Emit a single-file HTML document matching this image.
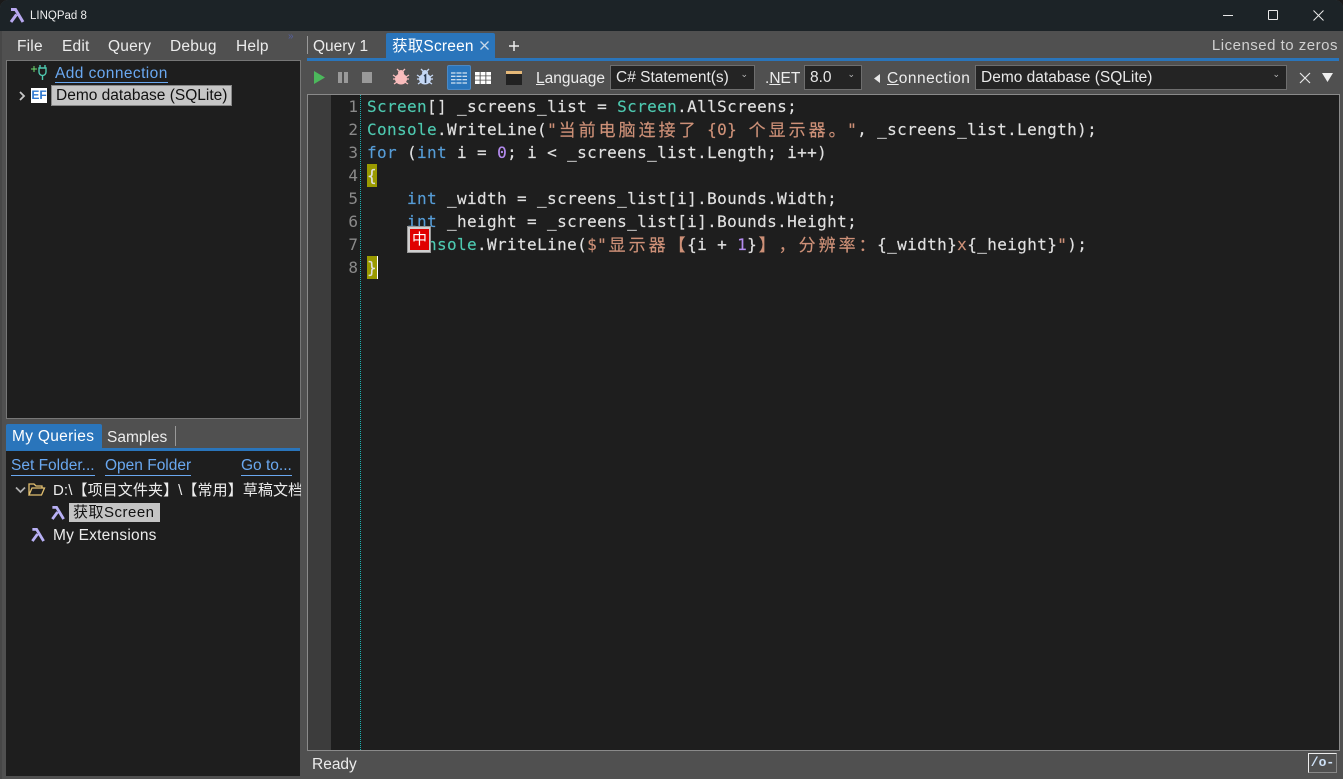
<!DOCTYPE html>
<html><head><meta charset="utf-8"><title>LINQPad 8</title>
<style>
html,body{margin:0;padding:0;width:1343px;height:779px;overflow:hidden;background:#1a1a1a}
*{box-sizing:border-box}
.a{position:absolute;white-space:pre}
#w{position:absolute;left:0;top:0;width:1343px;height:779px;background:#505050;border-radius:8px 8px 0 0;overflow:hidden;font-family:"Liberation Sans","Noto Sans CJK SC",sans-serif;font-size:15.5px;color:#ececec}
.lnk{color:#6aa8f0;border-bottom:1px solid #6aa8f0;line-height:18px;height:19px}
.ln{position:absolute;left:331px;width:27px;text-align:right;color:#8a8a8a;font:16px/23px "DejaVu Sans Mono",monospace}
.c{position:absolute;left:367px;height:23px;white-space:pre;font:16px/23px "DejaVu Sans Mono","Noto Sans CJK SC",monospace;letter-spacing:.37px;color:#e0e0e0;-webkit-text-stroke:.15px currentColor}
.t{color:#4ec9b0}.k{color:#569cd6}.s{color:#ce9178}.n{color:#b58cf0}
.z{display:inline-block;width:20px;font:17px/23px "Noto Sans CJK SC",sans-serif;letter-spacing:0;text-align:center;color:#ce9178;vertical-align:top;position:relative;top:-1px}
.cb{position:absolute;background:#242424;border:1px solid #6e6e6e;height:25px;top:65px;line-height:23px;padding-left:5px;color:#e8e8e8}
.ar{position:absolute;right:6px;top:-3px;font-size:9px;color:#bbb}
.m{letter-spacing:.2px}
u{text-decoration:underline}
</style></head><body>
<div id="w">
<!-- title bar -->
<div class="a" style="left:0;top:0;width:1343px;height:31px;background:#1c2327"></div>
<svg class="a" style="left:9px;top:7px" width="16" height="16" viewBox="0 0 16 16"><path d="M2 2.500h4.500L14 15M7.500 7.500L2 15" fill="none" stroke="#b8a8f0" stroke-width="3"/></svg>
<div class="a" style="left:30px;top:8px;font-size:11.500px;line-height:17px;color:#eee">LINQPad 8</div>
<div class="a" style="left:1223px;top:15px;width:10px;height:1px;background:#e8e8e8"></div>
<div class="a" style="left:1268px;top:10px;width:10px;height:10px;border:1px solid #e8e8e8;border-radius:1px"></div>
<svg class="a" style="left:1313px;top:10px" width="11" height="11" viewBox="0 0 11 11"><path d="M.5.5l10 10M10.500.5l-10 10" stroke="#e8e8e8" stroke-width="1"/></svg>
<!-- menu -->
<div class="a m" style="left:17px;top:38px;line-height:18px">File</div>
<div class="a m" style="left:62px;top:38px;line-height:18px">Edit</div>
<div class="a m" style="left:108px;top:38px;line-height:18px">Query</div>
<div class="a m" style="left:170px;top:38px;line-height:18px">Debug</div>
<div class="a m" style="left:236px;top:38px;line-height:18px">Help</div>
<div class="a" style="left:288px;top:31px;font-size:10px;color:#5560a0">»</div>
<!-- connections panel -->
<div class="a" style="left:6px;top:60px;width:295px;height:359px;background:#1e1e1e;border:1px solid #777"></div>
<svg class="a" style="left:30px;top:64px" width="20" height="18" viewBox="0 0 20 18"><path d="M1 5h6M4 2v6" stroke="#6fdc6f" stroke-width="1"/><path d="M10 4V1M15 4V1M9 4h7v4a3.500 3.500 0 0 1-7 0zM12.500 11.500V16" fill="none" stroke="#4ec9b0" stroke-width="1.400"/></svg>
<div class="a" style="left:55px;top:65px;letter-spacing:.42px;color:#6aa8f0;line-height:18px">Add connection</div>
<div class="a" style="left:55px;top:82px;width:113px;height:1px;background:#6aa8f0"></div>
<svg class="a" style="left:18px;top:91px" width="9" height="10" viewBox="0 0 9 10"><path d="M2 1l4 4-4 4" fill="none" stroke="#c8c8c8" stroke-width="1.800"/></svg>
<div class="a" style="left:31px;top:88px;width:16px;height:15px;background:#fff;color:#2f78d0;font-size:12px;font-weight:bold;line-height:15px;text-align:center">EF</div>
<div class="a" style="left:51px;top:85px;width:181px;height:21px;background:#c6c6c6;border:1px solid #888;color:#111;line-height:20px;padding-left:4px">Demo database (SQLite)</div>
<!-- my queries -->
<div class="a" style="left:6px;top:424px;width:96px;height:25px;background:#2a75bb;border-radius:2px 2px 0 0;color:#fff;line-height:26px;padding-left:6px;letter-spacing:.3px">My Queries</div>
<div class="a" style="left:107px;top:429px;line-height:18px">Samples</div>
<div class="a" style="left:175px;top:426px;width:1px;height:20px;background:#999"></div>
<div class="a" style="left:6px;top:448px;width:294px;height:3px;background:#2a75bb"></div>
<div class="a" style="left:6px;top:451px;width:294px;height:325px;background:#1e1e1e"></div>
<div class="a lnk" style="left:11px;top:457px">Set Folder...</div>
<div class="a lnk" style="left:105px;top:457px">Open Folder</div>
<div class="a lnk" style="left:241px;top:457px">Go to...</div>
<svg class="a" style="left:15px;top:486px" width="11" height="8" viewBox="0 0 11 8"><path d="M1 1.500l4.500 4.500L10 1.500" fill="none" stroke="#b0b0b0" stroke-width="1.700"/></svg>
<svg class="a" style="left:28px;top:482px" width="18" height="15" viewBox="0 0 18 15"><path d="M1 13V2h5l2 2h6v2M1 13l3-7h12.500l-3 7z" fill="none" stroke="#e3c070" stroke-width="1.300"/></svg>
<div class="a" style="left:53px;top:482px;width:248px;overflow:hidden;line-height:18px;font-size:15px;letter-spacing:.1px">D:\【项目文件夹】\【常用】草稿文档</div>
<svg class="a" style="left:50px;top:505px" width="16" height="15" viewBox="0 0 16 16"><path d="M2 2.500h4.500L14 15M7.500 7.500L2 15" fill="none" stroke="#b8b0f5" stroke-width="3"/></svg>
<div class="a" style="left:69px;top:503px;width:91px;height:19px;background:#c4c4c4;color:#111;line-height:19px;padding-left:4px;font-size:15px;letter-spacing:.5px">获取Screen</div>
<svg class="a" style="left:30px;top:527px" width="16" height="15" viewBox="0 0 16 16"><path d="M2 2.500h4.500L14 15M7.500 7.500L2 15" fill="none" stroke="#b8b0f5" stroke-width="3"/></svg>
<div class="a" style="left:53px;top:527px;line-height:18px;letter-spacing:.22px">My Extensions</div>
<!-- query tabs -->
<div class="a" style="left:307px;top:36px;width:1px;height:18px;background:#999"></div>
<div class="a" style="left:313px;top:38px;line-height:18px">Query 1</div>
<div class="a" style="left:386px;top:33px;width:109px;height:25px;background:#2a75bb;border-radius:2px 2px 0 0"></div>
<div class="a" style="left:392px;top:38px;line-height:18px;color:#fff;letter-spacing:.2px">获取Screen</div>
<svg class="a" style="left:480px;top:41px" width="9" height="9" viewBox="0 0 9 9"><path d="M.5.5l8 8M8.500.5l-8 8" stroke="#c8d8e8" stroke-width="1.300"/></svg>
<svg class="a" style="left:508px;top:40px" width="12" height="12" viewBox="0 0 12 12"><path d="M6 1v10M1 6h10" stroke="#eee" stroke-width="1.500"/></svg>
<div class="a" style="right:5px;top:37px;line-height:18px;font-size:15px;letter-spacing:.5px;color:#d0d0d0">Licensed to zeros</div>
<div class="a" style="left:307px;top:58px;width:1032px;height:3px;background:#2a75bb"></div>
<!-- toolbar -->
<svg class="a" style="left:313px;top:70px" width="13" height="15" viewBox="0 0 13 15"><path d="M1 1l11 6.500L1 14z" fill="#4cb85c"/></svg>
<div class="a" style="left:338px;top:72px;width:4px;height:11px;background:#999"></div>
<div class="a" style="left:344px;top:72px;width:4px;height:11px;background:#999"></div>
<div class="a" style="left:362px;top:72px;width:10px;height:11px;background:#999"></div>
<svg class="a" style="left:392px;top:68px" width="18" height="18" viewBox="0 0 18 18"><ellipse cx="9" cy="11" rx="6" ry="5.500" fill="#f9bcbc"/><circle cx="9" cy="5" r="3" fill="#f9bcbc"/><path d="M5 1l2 2M13 1l-2 2M1 7l3 2M17 7l-3 2M1 11h3M17 11h-3M2 16l3-2M16 16l-3-2" stroke="#f9bcbc" stroke-width="1.300"/></svg>
<svg class="a" style="left:416px;top:68px" width="18" height="18" viewBox="0 0 18 18"><ellipse cx="9" cy="11" rx="6" ry="5.500" fill="#c5d8f5"/><circle cx="9" cy="5" r="3" fill="#c5d8f5"/><path d="M5 1l2 2M13 1l-2 2M1 7l3 2M17 7l-3 2M1 11h3M17 11h-3M2 16l3-2M16 16l-3-2" stroke="#c5d8f5" stroke-width="1.300"/><path d="M8 8l1.500-1v8" fill="none" stroke="#2a3a50" stroke-width="1.600"/></svg>
<div class="a" style="left:447px;top:65px;width:24px;height:25px;background:#2a75bb;border:1px solid #4a88c4;border-radius:2px"></div>
<svg class="a" style="left:451px;top:72px" width="16" height="12" viewBox="0 0 16 12"><path d="M0 1h4.500M5.500 1h5M11.500 1H16M0 4.300h4.500M5.500 4.300h5M11.500 4.300H16M0 7.700h4.500M5.500 7.700h5M11.500 7.700H16M0 11h4.500M5.500 11h5M11.500 11H16" stroke="#fff" stroke-width="1"/></svg>
<svg class="a" style="left:475px;top:72px" width="16" height="12" viewBox="0 0 16 12"><path fill="#fff" d="M0 0h4.700v3.500H0zM5.600 0h4.800v3.500H5.600zM11.300 0H16v3.500h-4.700zM0 4.300h4.700v3.400H0zM5.600 4.300h4.800v3.400H5.600zM11.300 4.300H16v3.400h-4.700zM0 8.500h4.700V12H0zM5.600 8.500h4.800V12H5.600zM11.300 8.500H16V12h-4.700z"/></svg>
<div class="a" style="left:506px;top:71px;width:16px;height:14px;background:#222;border-top:3px solid #e5b878"></div>
<div class="a" style="left:536px;top:70px;line-height:18px"><u>L</u>anguage</div>
<div class="cb" style="left:610px;width:145px">C# Statement(s)<span class="ar">⌄</span></div>
<div class="a" style="left:765px;top:70px;line-height:18px">.<u>N</u>ET</div>
<div class="cb" style="left:804px;width:58px">8.0<span class="ar">⌄</span></div>
<svg class="a" style="left:874px;top:74px" width="7" height="9" viewBox="0 0 7 9"><path d="M6 0v9L0 4.500z" fill="#e8e8e8"/></svg>
<div class="a" style="left:887px;top:70px;line-height:18px;letter-spacing:.5px"><u>C</u>onnection</div>
<div class="cb" style="left:975px;width:312px">Demo database (SQLite)<span class="ar">⌄</span></div>
<svg class="a" style="left:1299px;top:72px" width="12" height="12" viewBox="0 0 12 12"><path d="M1 1l10 10M11 1L1 11" stroke="#e8e8e8" stroke-width="1.200"/></svg>
<svg class="a" style="left:1322px;top:73px" width="11" height="9" viewBox="0 0 11 9"><path d="M0 0h11L5.500 9z" fill="#eee"/></svg>
<!-- editor -->
<div class="a" style="left:307px;top:94px;width:1033px;height:657px;background:#1e1e1e;border:1px solid #8a8a8a"></div>
<div class="a" style="left:308px;top:95px;width:23px;height:655px;background:#3c3c3c"></div>
<div class="a" style="left:360px;top:95px;width:0;height:655px;border-left:1px dotted #1ab0b0"></div>
<div class="ln" style="top:95px">1</div><div class="ln" style="top:118px">2</div><div class="ln" style="top:141px">3</div><div class="ln" style="top:164px">4</div><div class="ln" style="top:187px">5</div><div class="ln" style="top:210px">6</div><div class="ln" style="top:233px">7</div><div class="ln" style="top:256px">8</div>
<div class="a" style="left:367px;top:164px;width:10px;height:23px;background:#9a9a00"></div>
<div class="a" style="left:367px;top:256px;width:10px;height:23px;background:#9a9a00"></div>
<div class="a" style="left:377px;top:256px;width:1px;height:23px;background:#fff"></div>
<div class="c" style="top:95px"><span class="t">Screen</span>[] _screens_list = <span class="t">Screen</span>.AllScreens;</div>
<div class="c" style="top:118px"><span class="t">Console</span>.WriteLine(<span class="s">"</span><span class="z">当</span><span class="z">前</span><span class="z">电</span><span class="z">脑</span><span class="z">连</span><span class="z">接</span><span class="z">了</span><span class="s"> {0} </span><span class="z">个</span><span class="z">显</span><span class="z">示</span><span class="z">器</span><span class="z">。</span><span class="s">"</span>, _screens_list.Length);</div>
<div class="c" style="top:141px"><span class="k">for</span> (<span class="k">int</span> i = <span class="n">0</span>; i &lt; _screens_list.Length; i++)</div>
<div class="c" style="top:164px">{</div>
<div class="c" style="top:187px">    <span class="k">int</span> _width = _screens_list[i].Bounds.Width;</div>
<div class="c" style="top:210px">    <span class="k">int</span> _height = _screens_list[i].Bounds.Height;</div>
<div class="c" style="top:233px">    <span class="t">Console</span>.WriteLine(<span class="s">$"</span><span class="z">显</span><span class="z">示</span><span class="z">器</span><span class="z">【</span>{i + <span class="n">1</span>}<span class="z">】</span><span class="z">，</span><span class="z">分</span><span class="z">辨</span><span class="z">率</span><span class="z">：</span>{_width}<span class="s">x</span>{_height}<span class="s">"</span>);</div>
<div class="c" style="top:256px">}</div>
<!-- IME -->
<div class="a" style="left:407px;top:226px;width:24px;height:27px;background:#d0d0d0;border:1px solid #999;padding:2px"><div style="width:19px;height:21px;background:#e00000;color:#fff;font-size:15px;line-height:21px;text-align:center">中</div></div>
<!-- status -->
<div class="a" style="left:312px;top:756px;line-height:18px">Ready</div>
<div class="a" style="left:1308px;top:753px;width:29px;height:20px;background:#505050;border:1px solid #eee;border-right-color:#888;border-bottom-color:#888;font:bold 13px/18px 'Liberation Mono',monospace;text-align:center;color:#cfe2f8">/o-</div>
<div class="a" style="left:0;top:31px;width:2px;height:748px;background:#474747"></div>
</div>
</body></html>
